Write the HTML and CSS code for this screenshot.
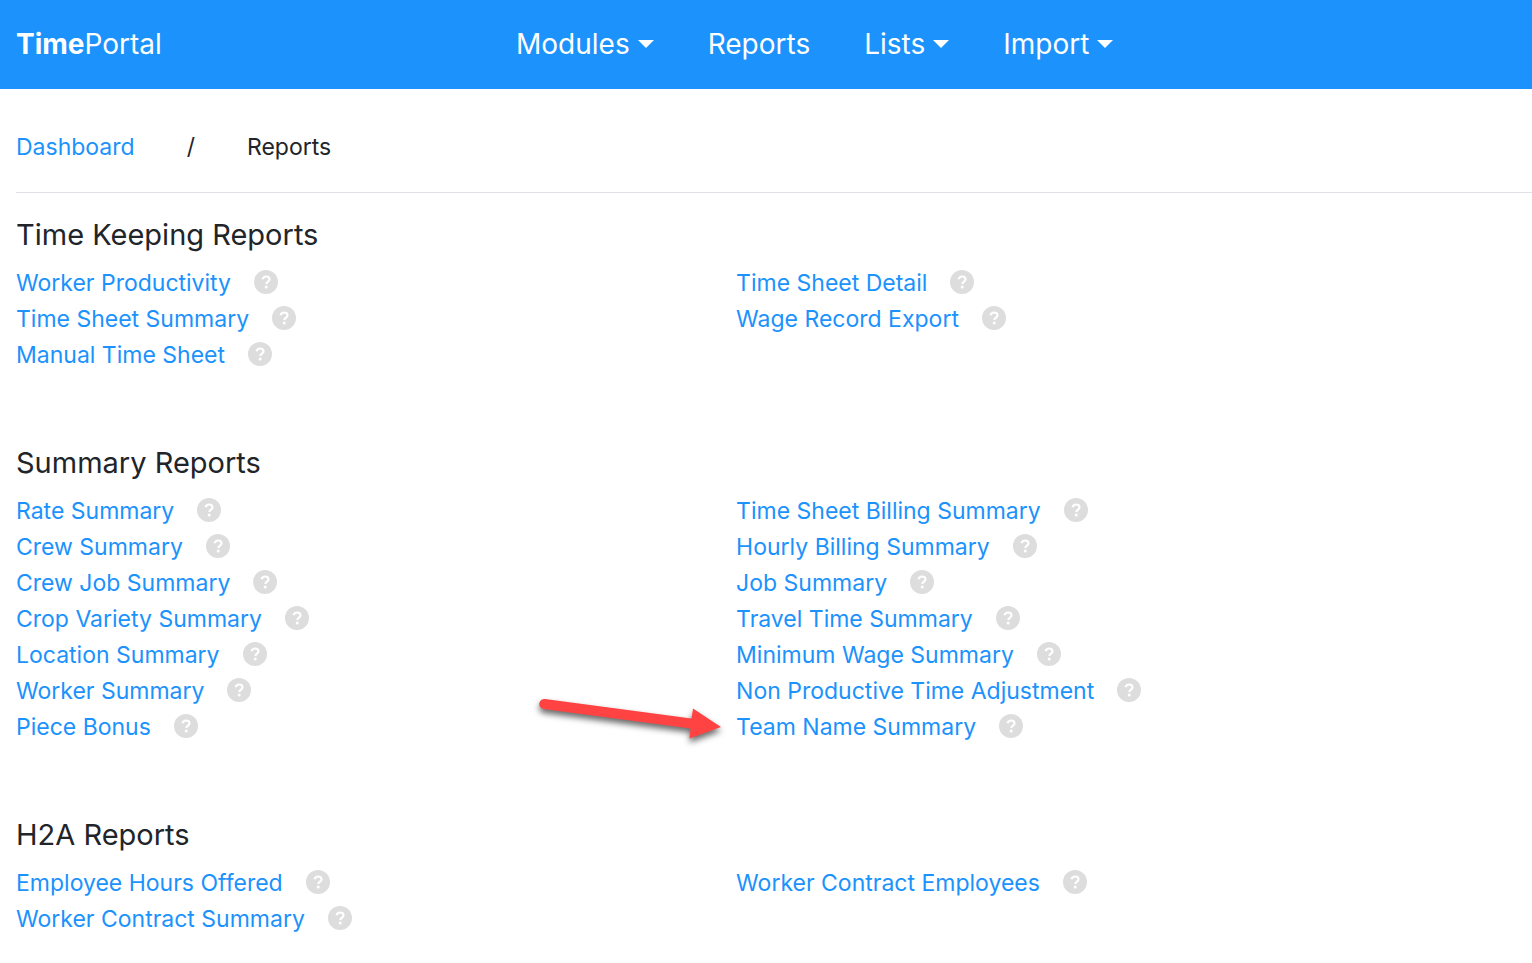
FILE: index.html
```html
<!DOCTYPE html>
<html lang="en">
  <head>
    <meta charset="UTF-8" />
    <meta name="viewport" content="width=device-width, initial-scale=1.0" />
    <title>TimePortal - Reports</title>
    <link rel="stylesheet" href="styles.css">
  </head>
  <body>
    <svg class="sprite" aria-hidden="true">
      <symbol id="help" viewBox="0 0 24 24">
        <circle cx="12" cy="12" r="12" fill="#dddddd" />
        <path d="M8.600 9.200C9 7.300 10.400 6.500 12.100 6.500c2 0 3.400 1.200 3.400 2.800 0 2.300-2.900 2.400-3.200 4.700" fill="none" stroke="#fff" stroke-width="2.200" />
        <circle cx="12.200" cy="17" r="1.500" fill="#fff" />
      </symbol>
    </svg>

    <header class="navbar">
      <a class="brand" href="#"><strong>Time</strong>Portal</a>
      <nav class="nav">
        <button class="dropdown" type="button">Modules</button>
        <a href="#">Reports</a>
        <button class="dropdown" type="button">Lists</button>
        <button class="dropdown" type="button">Import</button>
      </nav>
    </header>

    <main class="content">
      <nav class="breadcrumb" aria-label="Breadcrumb">
        <a href="#">Dashboard</a>
        <span>/</span>
        <span>Reports</span>
      </nav>

      <section class="reports">
        <h2>Time Keeping Reports</h2>
        <div class="columns">
          <ul>
            <li><a href="#">Worker Productivity</a><button class="help" type="button" aria-label="Help"><svg><use href="#help" /></svg></button></li>
            <li><a href="#">Time Sheet Summary</a><button class="help" type="button" aria-label="Help"><svg><use href="#help" /></svg></button></li>
            <li><a href="#">Manual Time Sheet</a><button class="help" type="button" aria-label="Help"><svg><use href="#help" /></svg></button></li>
          </ul>
          <ul>
            <li><a href="#">Time Sheet Detail</a><button class="help" type="button" aria-label="Help"><svg><use href="#help" /></svg></button></li>
            <li><a href="#">Wage Record Export</a><button class="help" type="button" aria-label="Help"><svg><use href="#help" /></svg></button></li>
          </ul>
        </div>
      </section>

      <section class="reports">
        <h2>Summary Reports</h2>
        <div class="columns">
          <ul>
            <li><a href="#">Rate Summary</a><button class="help" type="button" aria-label="Help"><svg><use href="#help" /></svg></button></li>
            <li><a href="#">Crew Summary</a><button class="help" type="button" aria-label="Help"><svg><use href="#help" /></svg></button></li>
            <li><a href="#">Crew Job Summary</a><button class="help" type="button" aria-label="Help"><svg><use href="#help" /></svg></button></li>
            <li><a href="#">Crop Variety Summary</a><button class="help" type="button" aria-label="Help"><svg><use href="#help" /></svg></button></li>
            <li><a href="#">Location Summary</a><button class="help" type="button" aria-label="Help"><svg><use href="#help" /></svg></button></li>
            <li><a href="#">Worker Summary</a><button class="help" type="button" aria-label="Help"><svg><use href="#help" /></svg></button></li>
            <li><a href="#">Piece Bonus</a><button class="help" type="button" aria-label="Help"><svg><use href="#help" /></svg></button></li>
          </ul>
          <ul>
            <li><a href="#">Time Sheet Billing Summary</a><button class="help" type="button" aria-label="Help"><svg><use href="#help" /></svg></button></li>
            <li><a href="#">Hourly Billing Summary</a><button class="help" type="button" aria-label="Help"><svg><use href="#help" /></svg></button></li>
            <li><a href="#">Job Summary</a><button class="help" type="button" aria-label="Help"><svg><use href="#help" /></svg></button></li>
            <li><a href="#">Travel Time Summary</a><button class="help" type="button" aria-label="Help"><svg><use href="#help" /></svg></button></li>
            <li><a href="#">Minimum Wage Summary</a><button class="help" type="button" aria-label="Help"><svg><use href="#help" /></svg></button></li>
            <li><a href="#">Non Productive Time Adjustment</a><button class="help" type="button" aria-label="Help"><svg><use href="#help" /></svg></button></li>
            <li class="pointed">
              <svg class="arrow" viewBox="0 0 190 60" aria-hidden="true">
                <path d="M9 5L155.500 24.500 157 14.500 185 33 153.500 44.500 154.500 34.500 7.500 15A5 5 0 0 1 9 5z" fill="#ff4343" />
              </svg>
              <a href="#">Team Name Summary</a><button class="help" type="button" aria-label="Help"><svg><use href="#help" /></svg></button>
            </li>
          </ul>
        </div>
      </section>

      <section class="reports">
        <h2>H2A Reports</h2>
        <div class="columns">
          <ul>
            <li><a href="#">Employee Hours Offered</a><button class="help" type="button" aria-label="Help"><svg><use href="#help" /></svg></button></li>
            <li><a href="#">Worker Contract Summary</a><button class="help" type="button" aria-label="Help"><svg><use href="#help" /></svg></button></li>
          </ul>
          <ul>
            <li><a href="#">Worker Contract Employees</a><button class="help" type="button" aria-label="Help"><svg><use href="#help" /></svg></button></li>
          </ul>
        </div>
      </section>
    </main>
  </body>
</html>
```
FILE: styles.css
```css
* {
  box-sizing: border-box;
}

body {
  margin: 0;
  background: #fff;
  color: #212529;
  font-family: "Inter", sans-serif;
  font-size: 23px;
  line-height: 36px;
}

a {
  color: #1b92fc;
  text-decoration: none;
}

button {
  padding: 0;
  border: none;
  background: none;
  color: inherit;
  font: inherit;
  cursor: pointer;
}

.sprite {
  display: none;
}

.navbar {
  display: grid;
  grid-template-columns: 1fr 2fr;
  align-items: center;
  padding: 22px 16px 23px;
  background: #1b92fc;
  color: #fff;
  font-size: 28px;
  line-height: 44px;
}

.navbar a {
  color: #fff;
}

.brand strong {
  font-weight: 700;
}

.nav {
  display: flex;
  gap: 54px;
}

.dropdown {
  display: flex;
  align-items: center;
  gap: 8px;
}

.dropdown::after {
  content: "";
  border-top: 8px solid #fff;
  border-right: 8px solid transparent;
  border-left: 8px solid transparent;
}

.content {
  padding-left: 16px;
}

.breadcrumb {
  display: flex;
  gap: 52px;
  padding: 40px 0 27px;
  border-bottom: 1px solid #dee2e6;
  margin-bottom: 24px;
}

.reports {
  margin-bottom: 72px;
}

.reports h2 {
  margin: 0 0 12px;
  font-size: 29px;
  font-weight: 400;
  line-height: 36px;
}

.columns {
  display: grid;
  grid-template-columns: 19fr 21fr;
}

.columns ul {
  margin: 0;
  padding: 0;
  list-style: none;
}

.columns li {
  display: flex;
  gap: 23px;
}

.help {
  height: 24px;
  margin-top: 5px;
}

.help svg {
  display: block;
  width: 24px;
  height: 24px;
}

.pointed {
  position: relative;
}

.arrow {
  position: absolute;
  top: -15px;
  right: 100%;
  width: 190px;
  height: 60px;
  margin-right: 10px;
  filter: drop-shadow(0 4px 3px rgba(0, 0, 0, 0.6));
}
```
